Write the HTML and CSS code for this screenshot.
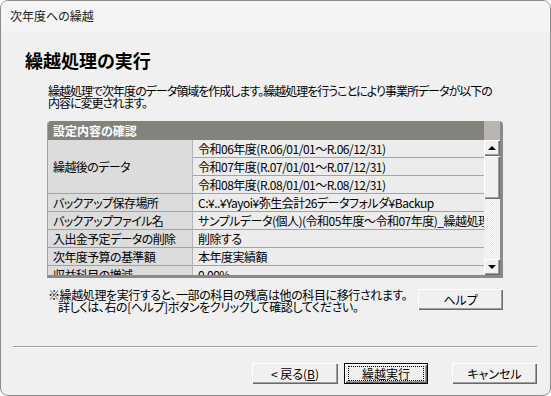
FILE: index.html
```html
<!DOCTYPE html>
<html lang="ja">
<head>
    <meta charset="UTF-8">
    <meta name="viewport" content="width=device-width, initial-scale=1.0">
    <link rel="stylesheet" href="styles.css">
    <title>次年度への繰越</title>
</head>
<body>
    <div class="window">
        <div class="titlebar">次年度への繰越</div>

        <h1 class="heading">繰越処理の実行</h1>
        <p class="lead">繰越処理で次年度のデータ領域を作成します。繰越処理を行うことにより事業所データが以下の<br>内容に変更されます。</p>

        <div class="panel">
            <div class="sheet">
                <div class="sheet-head">設定内容の確認</div>
                <div class="rows">
                    <div class="label span3">繰越後のデータ</div>
                    <div class="value">令和06年度(R.06/01/01～R.06/12/31)</div>
                    <div class="value">令和07年度(R.07/01/01～R.07/12/31)</div>
                    <div class="value">令和08年度(R.08/01/01～R.08/12/31)</div>
                    <div class="label">バックアップ保存場所</div>
                    <div class="value">C:¥..¥Yayoi¥弥生会計26データフォルダ¥Backup</div>
                    <div class="label">バックアップファイル名</div>
                    <div class="value">サンプルデータ(個人)(令和05年度～令和07年度)_繰越処理前</div>
                    <div class="label">入出金予定データの削除</div>
                    <div class="value">削除する</div>
                    <div class="label">次年度予算の基準額</div>
                    <div class="value">本年度実績額</div>
                    <div class="label">収益科目の増減</div>
                    <div class="value">0.00%</div>
                </div>
            </div>
            <div class="scrollbar">
                <div class="sb-corner"></div>
                <div class="sb-btn up"></div>
                <div class="sb-thumb"></div>
                <div class="sb-track"></div>
                <div class="sb-btn down"></div>
            </div>
        </div>

        <div class="note-row">
            <p class="note">
                <span class="line">※繰越処理を実行すると、一部の科目の残高は他の科目に移行されます。</span>
                <span class="line indent">詳しくは、右の[ヘルプ]ボタンをクリックして確認してください。</span>
            </p>
            <button class="btn help">ヘルプ</button>
        </div>

        <div class="separator"></div>

        <div class="actions">
            <button class="btn back">&lt; 戻る(<u>B</u>)</button>
            <button class="btn default"><span class="focus">繰越実行</span></button>
            <button class="btn cancel">キャンセル</button>
        </div>
    </div>
</body>
</html>
```

FILE: styles.css
```css
body {
    margin: 0;
    font-family: "Noto Sans CJK JP", "Noto Sans", sans-serif;
    font-size: 12px;
    font-feature-settings: "palt";
    color: #000;
    background: #ffffff;
}

.window {
    width: 549px;
    height: 394px;
    border: 1px solid #8c8c8c;
    border-radius: 8px;
    background-color: #f0f0f0;
    overflow: hidden;
    display: flex;
    flex-direction: column;
}

.titlebar {
    height: 30px;
    line-height: 30px;
    padding-left: 9px;
    background-color: #f4f4f4;
    color: #1b1b1b;
}

.heading {
    margin: 20px 0 0 24px;
    font-size: 18px;
    line-height: 18px;
    font-weight: bold;
}

.lead {
    margin: 16px 0 0 47px;
    line-height: 12px;
    letter-spacing: -1px;
    white-space: nowrap;
}

/* settings table */
.panel {
    display: flex;
    width: 452px;
    height: 154px;
    margin: 12px 0 0 46px;
    border-left: 1px solid #a0a0a0;
    border-right: 3px solid #8a8a8a;
    border-bottom: 3px solid #8a8a8a;
    border-radius: 4px 4px 0 0;
    overflow: hidden;
}

.sheet {
    flex: 1;
    overflow: hidden;
}

.sheet-head {
    height: 19px;
    line-height: 19px;
    padding-left: 5px;
    background-color: #84827d;
    color: #fff;
    font-weight: bold;
}

.rows {
    display: grid;
    grid-template-columns: 145px 1fr;
    grid-auto-rows: 18px;
}

.label,
.value {
    box-sizing: border-box;
    padding-left: 5px;
    line-height: 17px;
    border-bottom: 1px solid #a3a3a3;
    white-space: nowrap;
    overflow: hidden;
}

.label {
    background-color: #dcdcdc;
    border-right: 1px solid #b5b5b5;
    letter-spacing: -0.6px;
}

.value {
    background-color: #ececec;
    letter-spacing: -0.5px;
}

.span3 {
    grid-row: span 3;
    line-height: 53px;
}

.scrollbar {
    width: 16px;
    display: flex;
    flex-direction: column;
}

.sb-corner {
    height: 19px;
    background-color: #b9b6b1;
}

.sb-btn,
.sb-thumb {
    box-sizing: border-box;
    background-color: #f0f0f0;
    box-shadow: inset 1px 1px #fff, inset -1px -1px #696969, inset -2px -2px #a0a0a0;
}

.sb-btn {
    height: 16px;
    display: flex;
    align-items: center;
    justify-content: center;
}

.sb-btn::before {
    content: "";
    width: 0;
    height: 0;
    border-left: 4px solid transparent;
    border-right: 4px solid transparent;
    margin: 0 1px 1px 0;
}

.up::before {
    border-bottom: 4px solid #000;
}

.down::before {
    border-top: 4px solid #000;
}

.sb-thumb {
    height: 43px;
}

.sb-track {
    flex: 1;
    background: repeating-conic-gradient(#ffffff 0 25%, #e4e4e4 0 50%) 0 0 / 2px 2px;
}

/* note + help */
.note-row {
    display: flex;
    justify-content: space-between;
    align-items: flex-start;
    width: 455px;
    margin: 11px 0 0 47px;
}

.note {
    margin: 0;
    line-height: 11.5px;
    letter-spacing: -0.4px;
    white-space: nowrap;
}

.line {
    display: block;
}

.indent {
    padding-left: 10px;
}

.btn {
    height: 21px;
    padding: 0;
    border: none;
    background-color: #f0f0f0;
    font: inherit;
    font-feature-settings: "palt";
    color: #000;
    box-shadow: inset 1px 1px #fff, inset -1px -1px #696969, inset -2px -2px #a0a0a0;
}

.help {
    width: 85px;
}

.separator {
    height: 0;
    margin: 34px 13px 0 12px;
    border-top: 1px solid #a0a0a0;
    border-bottom: 1px solid #fff;
}

.actions {
    display: flex;
    justify-content: flex-end;
    padding-right: 13px;
    margin-top: 15px;
}

.back {
    width: 86px;
}

.default {
    width: 84px;
    margin-left: 6px;
    border: 1px solid #000;
    box-shadow: inset 1px 1px #fff, inset -1px -1px #696969, inset -2px -2px #a0a0a0;
    display: flex;
    align-items: center;
    justify-content: center;
}

.focus {
    display: block;
    width: 74px;
    height: 13px;
    line-height: 13px;
    border: 1px dotted #000;
}

.cancel {
    width: 85px;
    margin-left: 24px;
}
```
